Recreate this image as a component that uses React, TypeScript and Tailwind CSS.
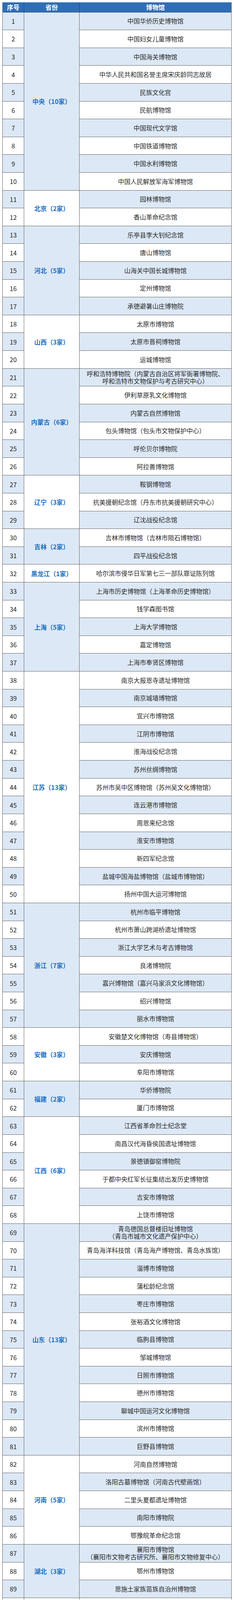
import React from 'react';

type Group = { province: string; museums: string[] };

// 博物馆名单，按省份分组（\n 表示单元格内换行）
const groups: Group[] = [
  {
    province: '中央（10家）',
    museums: [
      '中国华侨历史博物馆',
      '中国妇女儿童博物馆',
      '中国海关博物馆',
      '中华人民共和国名誉主席宋庆龄同志故居',
      '民族文化宫',
      '民航博物馆',
      '中国现代文学馆',
      '中国铁道博物馆',
      '中国水利博物馆',
      '中国人民解放军海军博物馆'
    ]
  },
  { province: '北京（2家）', museums: ['园林博物馆', '香山革命纪念馆'] },
  {
    province: '河北（5家）',
    museums: ['乐亭县李大钊纪念馆', '唐山博物馆', '山海关中国长城博物馆', '定州博物馆', '承德避暑山庄博物院']
  },
  { province: '山西（3家）', museums: ['太原市博物馆', '太原市晋祠博物馆', '运城博物馆'] },
  {
    province: '内蒙古（6家）',
    museums: [
      '呼和浩特博物院（内蒙古自治区将军衙署博物院、\n呼和浩特市文物保护与考古研究中心）',
      '伊利草原乳文化博物馆',
      '内蒙古自然博物馆',
      '包头博物馆（包头市文物保护中心）',
      '呼伦贝尔博物院',
      '阿拉善博物馆'
    ]
  },
  { province: '辽宁（3家）', museums: ['鞍钢博物馆', '抗美援朝纪念馆（丹东市抗美援朝研究中心）', '辽沈战役纪念馆'] },
  { province: '吉林（2家）', museums: ['吉林市博物馆（吉林市陨石博物馆）', '四平战役纪念馆'] },
  { province: '黑龙江（1家）', museums: ['哈尔滨市侵华日军第七三一部队罪证陈列馆'] },
  {
    province: '上海（5家）',
    museums: ['上海市历史博物馆（上海革命历史博物馆）', '钱学森图书馆', '上海大学博物馆', '嘉定博物馆', '上海市奉贤区博物馆']
  },
  {
    province: '江苏（13家）',
    museums: [
      '南京大报恩寺遗址博物馆',
      '南京城墙博物馆',
      '宜兴市博物馆',
      '江阴市博物馆',
      '淮海战役纪念馆',
      '苏州丝绸博物馆',
      '苏州市吴中区博物馆（苏州吴文化博物馆）',
      '连云港市博物馆',
      '周恩来纪念馆',
      '淮安市博物馆',
      '新四军纪念馆',
      '盐城中国海盐博物馆（盐城市博物馆）',
      '扬州中国大运河博物馆'
    ]
  },
  {
    province: '浙江（7家）',
    museums: [
      '杭州市临平博物馆',
      '杭州市萧山跨湖桥遗址博物馆',
      '浙江大学艺术与考古博物馆',
      '良渚博物院',
      '嘉兴博物馆（嘉兴马家浜文化博物馆）',
      '绍兴博物馆',
      '丽水市博物馆'
    ]
  },
  { province: '安徽（3家）', museums: ['安徽楚文化博物馆（寿县博物馆）', '安庆博物馆', '阜阳市博物馆'] },
  { province: '福建（2家）', museums: ['华侨博物院', '厦门市博物馆'] },
  {
    province: '江西（6家）',
    museums: [
      '江西省革命烈士纪念堂',
      '南昌汉代海昏侯国遗址博物馆',
      '景德镇御窑博物院',
      '于都中央红军长征集结出发历史博物馆',
      '吉安市博物馆',
      '上饶市博物馆'
    ]
  },
  {
    province: '山东（13家）',
    museums: [
      '青岛德国总督楼旧址博物馆\n（青岛市城市文化遗产保护中心）',
      '青岛海洋科技馆（青岛海产博物馆、青岛水族馆）',
      '淄博市博物馆',
      '蒲松龄纪念馆',
      '枣庄市博物馆',
      '张裕酒文化博物馆',
      '临朐县博物馆',
      '邹城博物馆',
      '日照市博物馆',
      '德州市博物馆',
      '聊城中国运河文化博物馆',
      '滨州市博物馆',
      '巨野县博物馆'
    ]
  },
  {
    province: '河南（5家）',
    museums: ['河南自然博物馆', '洛阳古墓博物馆（河南古代壁画馆）', '二里头夏都遗址博物馆', '南阳市博物院', '鄂豫皖革命纪念馆']
  },
  {
    province: '湖北（3家）',
    museums: ['襄阳市博物馆\n（襄阳市文物考古研究所、襄阳市文物修复中心）', '鄂州市博物馆', '恩施土家族苗族自治州博物馆']
  }
];

const rowBg = (n: number) => (n % 2 === 1 ? 'bg-[#dce8f5]' : 'bg-white');

function GroupBlock({ group, start, index }: { group: Group; start: number; index: number }) {
  return (
    <div className="flex">
      <div className="flex w-[55px] shrink-0 flex-col border-r border-[#646464]">
        {group.museums.map((_, i) => {
          const n = start + i;
          return (
            <div key={n} className={`flex h-[45.62px] items-center justify-center border-b border-[#646464] text-[16px] text-[#222] ${rowBg(n)}`}>
              {n}
            </div>
          );
        })}
      </div>
      <div
        className={`flex w-[142px] shrink-0 items-center justify-center border-b border-r border-[#646464] text-[16px] font-bold text-[#1d6fc2] ${
          index % 2 === 0 ? 'bg-[#dce8f5]' : 'bg-white'
        }`}
      >
        {group.province}
      </div>
      <div className="flex min-w-0 flex-1 flex-col">
        {group.museums.map((name, i) => {
          const n = start + i;
          return (
            <div
              key={n}
              className={`flex h-[45.62px] flex-col items-center justify-center border-b border-[#646464] px-1 text-center text-[16px] leading-[19px] text-[#2a2a2a] ${rowBg(n)}`}
            >
              {name.split('\n').map((line) => (
                <span key={line} className="block whitespace-nowrap">
                  {line}
                </span>
              ))}
            </div>
          );
        })}
      </div>
    </div>
  );
}

export default function App() {
  let counter = 1;
  const blocks = groups.map((group, index) => {
    const start = counter;
    counter += group.museums.length;
    return <GroupBlock key={group.province} group={group} start={start} index={index} />;
  });

  return (
    <div className="bg-white px-[6px] pt-[6px]" style={{ fontFamily: '"Noto Sans CJK SC", "Noto Sans", sans-serif' }}>
      <div className="border-l border-r border-[#646464]">
        <div className="flex h-[25.5px] border-b border-[#2a4f80] bg-[#2f6eb5] text-[16px] font-bold text-white">
          <div className="flex w-[55px] shrink-0 items-center justify-center border-r border-[#23446f]">序号</div>
          <div className="flex w-[142px] shrink-0 items-center justify-center border-r border-[#23446f]">省份</div>
          <div className="flex flex-1 items-center justify-center">博物馆</div>
        </div>
        {blocks}
        <div className="flex h-[4px]">
          <div className="w-[55px] shrink-0 border-r border-[#646464]" />
          <div className="w-[142px] shrink-0 border-r border-[#646464]" />
          <div className="flex-1" />
        </div>
      </div>
    </div>
  );
}
